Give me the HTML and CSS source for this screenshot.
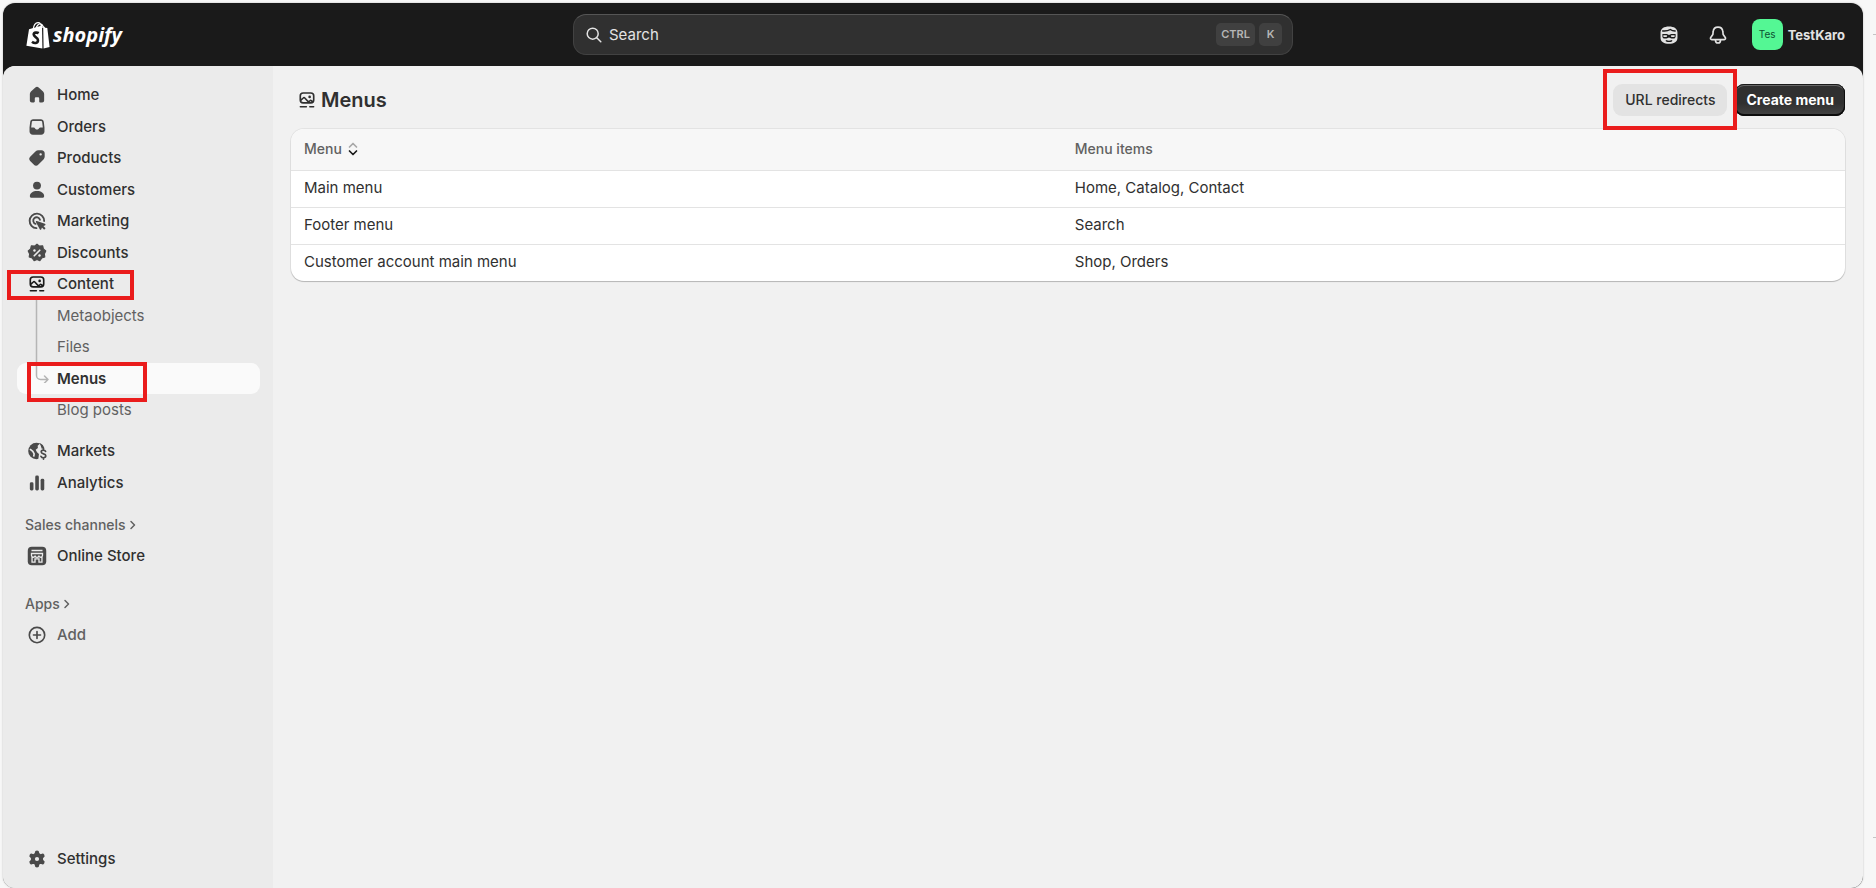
FILE: index.html
```
<!DOCTYPE html>
<html lang="en">
<head>
    <meta charset="UTF-8">
    <meta name="viewport" content="width=device-width, initial-scale=1.0">
    <title>Menus - TestKaro</title>
    <link rel="stylesheet" href="styles.css">
</head>
<body>

    <svg class="sprite" aria-hidden="true">
        <symbol id="icon-content" viewBox="0 0 20 20">
            <rect x="3.900" y="3.600" width="12.200" height="9" rx="2.600" fill="none" stroke="currentColor" stroke-width="1.500"/>
            <path d="M4.200 10.400l2.400-2.200a1 1 0 0 1 1.400 0l3.400 3.600 1.200-1.100a1 1 0 0 1 1.400 0l1.600 1.200" fill="none" stroke="currentColor" stroke-width="1.500"/>
            <circle cx="12.400" cy="7.200" r="1.200" fill="currentColor"/>
            <path d="M4 16.100h5.400M12.600 16.100h3.400" stroke="currentColor" stroke-width="1.500" stroke-linecap="round"/>
        </symbol>
        <symbol id="icon-chevron" viewBox="0 0 10 10">
            <path d="M3 1.500l3.500 3.500L3 8.500" fill="none" stroke="currentColor" stroke-width="1.500" stroke-linecap="round" stroke-linejoin="round"/>
        </symbol>
    </svg>

    <div class="app">
        <header class="topbar">
            <a class="logo" href="#" aria-label="shopify home">
                <svg class="logo-bag" viewBox="0 0 24 28">
                    <path d="M7 9C7.500 5 9.500 1.600 12 1.600S15.500 4 15.700 7M10 8C10.500 5 12.500 2.700 14.300 2.900S17 5 17.200 7" fill="none" stroke="#fff" stroke-width="1.200"/>
                    <path d="M3 8.300l13-3.700.4 23L.4 24.700z" fill="#fff"/>
                    <path d="M17.200 4.600l2 2.200 2.100.3 2.300 18.800-6 1.700z" fill="#fff"/>
                    <path d="M12.700 12.200c-1.200-.8-5-1.100-5 1.400 0 2.500 4.300 2.600 4.300 5.700 0 3.300-3.800 3.300-6 1.500" fill="none" stroke="#1a1a1a" stroke-width="2.600"/>
                </svg>
                <span class="logo-text">shopify</span>
            </a>

            <button class="search" type="button">
                <svg class="search-icon" viewBox="0 0 16 16"><circle cx="6.700" cy="6.700" r="5.500"/><path d="M10.800 10.800l4 4"/></svg>
                <span class="search-label">Search</span>
                <kbd>CTRL</kbd>
                <kbd>K</kbd>
            </button>

            <div class="topbar-right">
                <button class="icon-button" type="button" aria-label="Sidekick">
                    <svg viewBox="0 0 20 20">
                        <path d="M2.300 8C2.300 4 5.500 2.200 10 2.200S17.700 4 17.700 8v4.500c0 3.700-3.200 5.500-7.700 5.500s-7.700-1.800-7.700-5.500z" fill="#e3e3e3"/>
                        <path d="M4.200 6.300c2.600.3 5-.1 7-1.300 1.300.9 2.700 1.300 4.400 1.400" fill="none" stroke="#1a1a1a" stroke-width="1.300" stroke-linecap="round"/>
                        <path d="M4 9.200h4l2 .9 2-.9h4v2.300a2 2 0 0 1-2 1.700h-1.700c-1 0-1.500-.9-2.300-.9s-1.300.9-2.300.9H6a2 2 0 0 1-2-1.700z" fill="#1a1a1a"/>
                        <path d="M5.400 11h2.200M12.400 11h2.200" stroke="#e3e3e3" stroke-width="1.500" stroke-linecap="round"/>
                        <path d="M7.600 15.300c1.500.6 3.300.6 4.800 0" fill="none" stroke="#1a1a1a" stroke-width="1.300" stroke-linecap="round"/>
                    </svg>
                </button>
                <button class="icon-button" type="button" aria-label="Notifications">
                    <svg viewBox="0 0 20 20" fill="none" stroke="#e3e3e3" stroke-width="1.500" stroke-linejoin="round">
                        <path d="M10 2.800c-2.500 0-4.200 1.800-4.400 4.200l-.3 2.600-1.900 2.700c-.6.9-.1 1.900.9 1.900h11.400c1 0 1.500-1 .9-1.900l-1.900-2.700-.3-2.600C14.200 4.600 12.500 2.800 10 2.800z"/>
                        <path d="M7.700 14.500c0 3.700 4.600 3.700 4.600 0"/>
                    </svg>
                </button>
                <button class="account" type="button">
                    <span class="avatar">Tes</span>
                    <span>TestKaro</span>
                </button>
            </div>
        </header>

        <div class="frame">
            <nav class="sidebar" aria-label="Main">
                <ul class="nav-list">
                    <li><a class="nav-item" href="#">
                        <svg class="nav-icon" viewBox="0 0 20 20"><path d="M8.500 3.100a2.200 2.200 0 0 1 3 0l4 3.700c.6.600 1 1.400 1 2.200v6c0 1-.8 1.800-1.800 1.800h-1.900a.8.8 0 0 1-.8-.8v-2.700c0-.7-.5-1.200-1.200-1.200h-1.600c-.7 0-1.200.5-1.200 1.200V16c0 .4-.4.8-.8.800H5.300c-1 0-1.800-.8-1.800-1.800V9c0-.8.4-1.600 1-2.200z"/></svg>
                        Home</a></li>
                    <li><a class="nav-item" href="#">
                        <svg class="nav-icon" viewBox="0 0 20 20"><path fill-rule="evenodd" d="M6.500 3h7c1.500 0 2.500 1 2.700 2.400l.6 5.100V14c0 1.700-1.300 3-3 3H6.200c-1.700 0-3-1.300-3-3v-3.500l.6-5.100C4 4 5 3 6.500 3zm0 1.500c-.7 0-1.100.4-1.200 1.100l-.6 4.900h2.200c.7 0 1.100.3 1.400.8.600 1.300 2.800 1.300 3.400 0 .3-.5.7-.8 1.400-.8h2.200l-.6-4.900c-.1-.7-.5-1.100-1.200-1.100z"/></svg>
                        Orders</a></li>
                    <li><a class="nav-item" href="#">
                        <svg class="nav-icon" viewBox="0 0 20 20"><path fill-rule="evenodd" d="M11.300 3h2.900C15.800 3 17 4.200 17 5.800v2.900c0 1-.4 2-1.100 2.700l-4.600 4.600a3 3 0 0 1-4.300 0L4 13a3 3 0 0 1 0-4.300L8.600 4.100A3.800 3.800 0 0 1 11.300 3zm2 4.800a1.100 1.100 0 1 0 0-2.200 1.100 1.100 0 0 0 0 2.200z"/></svg>
                        Products</a></li>
                    <li><a class="nav-item" href="#">
                        <svg class="nav-icon" viewBox="0 0 20 20"><circle cx="10" cy="6" r="3.600"/><path d="M3.500 15.600c0-2.700 2.800-4.600 6.500-4.600s6.500 1.900 6.500 4.600c0 .8-.6 1.400-1.400 1.400H4.900c-.8 0-1.400-.6-1.400-1.400z"/></svg>
                        Customers</a></li>
                    <li><a class="nav-item" href="#">
                        <svg class="nav-icon" viewBox="0 0 20 20"><path d="M9.500 16.500a6.600 6.600 0 1 1 7-6.500M8.700 12.600a3.100 3.100 0 1 1 4-3.700" fill="none" stroke="currentColor" stroke-width="1.700" stroke-linecap="round"/><path d="M9.900 10l7.300 2.600c.7.300.7 1.100 0 1.400l-1.400.6 2 2-1.300 1.300-2-2-.6 1.500c-.3.7-1.200.7-1.400 0L9 10.800c-.2-.5.300-1 .9-.8z"/></svg>
                        Marketing</a></li>
                    <li><a class="nav-item" href="#">
                        <svg class="nav-icon" viewBox="0 0 20 20"><path d="M10 1.900l2.300 1.800 2.900-.2.600 2.800 2.200 1.900-1.300 2.600.4 2.900-2.800.9-1.700 2.400-2.600-1.100-2.600 1.100-1.700-2.400-2.800-.9.400-2.900L2 8.200l2.200-1.900.6-2.800 2.900.2z" stroke="currentColor" stroke-width="1" stroke-linejoin="round"/><path d="M7.500 12.500l5-5" stroke="#ebebeb" stroke-width="1.500" stroke-linecap="round"/><circle cx="7.700" cy="7.800" r="1.100" fill="#ebebeb"/><circle cx="12.300" cy="12.200" r="1.100" fill="#ebebeb"/></svg>
                        Discounts</a></li>
                    <li><a class="nav-item" href="#">
                        <svg class="nav-icon dark"><use href="#icon-content"/></svg>
                        Content</a>
                        <span class="mark mark-content"></span></li>
                    <li><a class="nav-item sub" href="#">Metaobjects</a></li>
                    <li><a class="nav-item sub" href="#">Files</a></li>
                    <li>
                        <a class="nav-item sub active" href="#" aria-current="page">Menus</a>
                        <svg class="branch" viewBox="0 0 14 84" fill="none" stroke="#b5b5b5" stroke-width="1.500" stroke-linecap="round" stroke-linejoin="round"><path d="M1.500 0v76.500a4 4 0 0 0 4 4H13M9.500 77l3.500 3.500L9.500 84"/></svg>
                        <span class="mark mark-menus"></span>
                    </li>
                    <li><a class="nav-item sub" href="#">Blog posts</a></li>
                </ul>

                <ul class="nav-list nav-more">
                    <li><a class="nav-item" href="#">
                        <svg class="nav-icon" viewBox="0 0 20 20"><circle cx="9.500" cy="10" r="7.500"/><path d="M3.600 8.200l2.600 2.200 1.200 2.200-.4 2.600" fill="none" stroke="#ebebeb" stroke-width="1.500" stroke-linejoin="round"/><path d="M12.600 3.400l-2 1.900.2 1.900-2 1.600 1.200 2.400 1.800 1.600-.6 4.800H20V6.500l-5.600-.5z" fill="#ebebeb"/><path d="M12.600 2.800A7.500 7.500 0 0 1 16.800 7.400l-2.500.5z"/><path d="M17.800 10.400c-.4-.8-1.100-1.200-2-1.200-1.100 0-2 .7-2 1.700 0 2.300 4.200 1.200 4.200 3.500 0 1-.9 1.700-2.100 1.700-1 0-1.900-.5-2.300-1.300M15.900 7.900v1.300M15.900 16.100v1.400" fill="none" stroke="currentColor" stroke-width="1.500" stroke-linecap="round"/></svg>
                        Markets</a></li>
                    <li><a class="nav-item" href="#">
                        <svg class="nav-icon" viewBox="0 0 20 20"><rect x="3.500" y="9.300" width="3.300" height="7.500" rx="1.300"/><rect x="8.400" y="3.200" width="3.300" height="13.600" rx="1.300"/><rect x="13.300" y="6.200" width="3.300" height="10.600" rx="1.300"/></svg>
                        Analytics</a></li>
                </ul>

                <a class="nav-heading" href="#">Sales channels <svg><use href="#icon-chevron"/></svg></a>
                <a class="nav-item" href="#">
                    <svg class="nav-icon" viewBox="0 0 20 20"><rect x="1.600" y="1.600" width="16.800" height="16.800" rx="3.600"/><path d="M5 5h10M5 7.700h10v1.800a1.600 1.600 0 0 1-3.300 0 1.600 1.600 0 0 1-3.400 0 1.600 1.600 0 0 1-3.300 0zM5.500 11v4.600h2.700v-3h3.600v3h2.700V11" fill="none" stroke="#ebebeb" stroke-width="1.200"/></svg>
                    Online Store</a>

                <a class="nav-heading nav-heading-apps" href="#">Apps <svg><use href="#icon-chevron"/></svg></a>
                <a class="nav-item muted" href="#">
                    <svg class="nav-icon" viewBox="0 0 20 20"><path d="M10 3a7 7 0 1 0 0 14 7 7 0 0 0 0-14zM6.800 10h6.400M10 6.800v6.400" fill="none" stroke="currentColor" stroke-width="1.500" stroke-linecap="round"/></svg>
                    Add</a>

                <a class="nav-item settings" href="#">
                    <svg class="nav-icon" viewBox="0 0 20 20"><path d="M10 4.300v11.400M5.100 7.200l9.800 5.600M14.900 7.200l-9.800 5.600" stroke="currentColor" stroke-width="4" stroke-linecap="round"/><circle cx="10" cy="10" r="5.600"/><circle cx="10" cy="10" r="1.900" fill="#ebebeb"/></svg>
                    Settings</a>
            </nav>

            <main class="page">
                <div class="page-header">
                    <h1><svg class="title-icon"><use href="#icon-content"/></svg>Menus</h1>
                    <div class="actions">
                        <div class="marked-action">
                            <button class="button" type="button">URL redirects</button>
                            <span class="mark mark-action"></span>
                        </div>
                        <button class="button primary" type="button">Create menu</button>
                    </div>
                </div>

                <div class="card">
                    <table>
                        <thead>
                            <tr>
                                <th class="col-menu" scope="col"><button class="sort" type="button">Menu
                                    <svg viewBox="0 0 10 14" fill="none" stroke-width="1.700" stroke-linecap="round" stroke-linejoin="round"><path d="M1.500 5L5 1.500 8.500 5" stroke="#a8a8a8"/><path d="M1.500 9L5 12.500 8.500 9" stroke="#1a1a1a"/></svg></button></th>
                                <th scope="col">Menu items</th>
                            </tr>
                        </thead>
                        <tbody>
                            <tr><td>Main menu</td><td>Home, Catalog, Contact</td></tr>
                            <tr><td>Footer menu</td><td>Search</td></tr>
                            <tr><td>Customer account main menu</td><td>Shop, Orders</td></tr>
                        </tbody>
                    </table>
                </div>
            </main>
        </div>
    </div>

</body>
</html>
```
FILE: styles.css
```
* {
    box-sizing: border-box;
}

body {
    margin: 0;
    padding: 3px 13px 0 3px;
    background-color: #f7f7f7;
    color: #303030;
    font-family: Inter, "Liberation Sans", sans-serif;
    font-size: 15px;
    line-height: 20px;
}

/* ticks at the window's right edge */
body::before,
body::after {
    content: "";
    position: absolute;
    top: 34px;
    right: 0;
    width: 3px;
    height: 1px;
    background-color: #c4c4c4;
}

body::after {
    top: auto;
    bottom: 50px;
}

button {
    border: 0;
    padding: 0;
    background: none;
    color: inherit;
    font: inherit;
    cursor: pointer;
}

a {
    color: inherit;
    text-decoration: none;
}

ul {
    list-style: none;
    margin: 0;
    padding: 0;
}

svg {
    display: block;
    flex-shrink: 0;
}

.sprite {
    position: absolute;
    width: 0;
    height: 0;
}

.app {
    display: flex;
    flex-direction: column;
    min-height: calc(100vh - 3px);
    border-radius: 12px;
    background-color: #1a1a1a;
    box-shadow: 0 0 2px rgba(0, 0, 0, 0.25);
}

/* top bar */
.topbar {
    display: grid;
    grid-template-columns: 1fr minmax(0, 720px) 1fr;
    align-items: center;
    height: 63px;
    padding: 0 18px;
    color: #e3e3e3;
}

.logo {
    display: flex;
    align-items: center;
    gap: 3px;
    padding-left: 5px;
}

.logo-bag {
    width: 24px;
    height: 28px;
}

.logo-text {
    color: #fff;
    font-family: "Open Sans", sans-serif;
    font-size: 20px;
    font-style: italic;
    font-weight: 700;
}

.search {
    display: flex;
    align-items: center;
    gap: 4px;
    height: 41px;
    padding: 0 10px 0 12px;
    border: 1px solid #424242;
    border-top-color: #555;
    border-radius: 13px;
    background-color: #303030;
    text-align: left;
}

.search-icon {
    width: 16px;
    height: 16px;
    margin-right: 3px;
    fill: none;
    stroke: #e3e3e3;
    stroke-width: 1.5;
    stroke-linecap: round;
}

.search-label {
    flex: 1;
}

kbd {
    min-width: 23px;
    padding: 2px 5px;
    border-radius: 5px;
    background-color: #404040;
    color: #b5b5b5;
    font-family: inherit;
    font-size: 11px;
    font-weight: 600;
    line-height: 19px;
    text-align: center;
}

.topbar-right {
    display: flex;
    align-items: center;
    justify-content: flex-end;
    gap: 27px;
}

.icon-button svg {
    width: 22px;
    height: 22px;
}

.account {
    display: flex;
    align-items: center;
    gap: 5px;
    margin-left: -4px;
    font-size: 13px;
    font-weight: 700;
}

.avatar {
    width: 31px;
    border-radius: 8px;
    background-color: #54f794;
    color: #0c5132;
    font-size: 10px;
    font-weight: 400;
    line-height: 31px;
}

/* frame */
.frame {
    display: flex;
    flex: 1;
    border-radius: 12px;
    background-color: #f1f1f1;
    overflow: hidden;
}

.sidebar {
    display: flex;
    flex-direction: column;
    width: 270px;
    padding: 13px 13px 14px 14px;
    background-color: #ebebeb;
    font-weight: 500;
}

.nav-list li {
    position: relative;
}

.nav-list li:nth-child(even) {
    padding-top: 1px;
}

.nav-more {
    margin-top: 10px;
}

.nav-item {
    display: flex;
    align-items: center;
    gap: 9px;
    height: 31px;
    padding-left: 9px;
    border-radius: 9px;
}

.nav-icon {
    width: 22px;
    height: 22px;
    fill: #4a4a4a;
    color: #4a4a4a;
}

.nav-icon.dark {
    color: #1a1a1a;
}

.sub {
    padding-left: 40px;
    color: #616161;
    font-weight: 400;
}

.sub.active {
    background-color: #fafafa;
    color: #303030;
    font-weight: 600;
}

.muted {
    color: #616161;
}

.nav-heading {
    display: flex;
    align-items: center;
    gap: 2px;
    height: 31px;
    margin-top: 11px;
    padding-left: 8px;
    color: #616161;
    font-size: 14px;
}

.nav-heading svg {
    width: 10px;
    height: 10px;
}

.nav-heading-apps {
    margin-top: 17px;
}

.settings {
    margin-top: auto;
}

.branch {
    position: absolute;
    left: 18px;
    bottom: 11px;
    width: 14px;
    height: 84px;
}

/* red highlight boxes */
.mark {
    position: absolute;
    border: 4px solid #ea1c1c;
    pointer-events: none;
}

.mark-content {
    top: 2px;
    left: -10px;
    width: 127px;
    height: 30px;
    z-index: 1;
}

.mark-menus {
    top: 0;
    left: 10px;
    width: 120px;
    height: 40px;
    z-index: 1;
}

.mark-action {
    inset: -15px -10px -14px;
}

/* page */
.page {
    flex: 1;
    min-width: 0;
    padding: 18px;
}

.page-header {
    display: flex;
    align-items: center;
    justify-content: space-between;
    margin-bottom: 13px;
    padding-left: 5px;
}

h1 {
    display: flex;
    align-items: center;
    gap: 3px;
    margin: 0;
    font-size: 20px;
    font-weight: 600;
    line-height: 28px;
}

.title-icon {
    width: 22px;
    height: 22px;
}

.actions {
    display: flex;
    gap: 8px;
}

.marked-action {
    position: relative;
    z-index: 1;
}

.button {
    height: 32px;
    padding: 0 12px;
    border-radius: 9px;
    background-color: #e3e3e3;
    font-size: 14px;
    font-weight: 500;
}

.button.primary {
    padding: 0 11px;
    background: linear-gradient(#303030 60%, #454545);
    box-shadow: inset 0 -1px 0 1px #0d0d0d, inset 0 0 0 1px #1a1a1a, inset 0 2px 0 #666;
    color: #fff;
    font-weight: 700;
}

.card {
    border-radius: 13px;
    background-color: #fff;
    box-shadow: 0 1px 1px rgba(0, 0, 0, 0.2), 0 0 0 1px #e3e3e3;
    overflow: hidden;
}

table {
    width: 100%;
    border-collapse: collapse;
}

th,
td {
    padding: 7px 13px 9px;
    text-align: left;
}

th {
    padding: 10px 13px 11px;
    background-color: #f7f7f7;
    color: #616161;
    font-size: 14px;
    font-weight: 500;
}

.col-menu {
    width: 49.6%;
}

tbody tr {
    border-top: 1px solid #e3e3e3;
}

.sort {
    display: flex;
    align-items: center;
    gap: 6px;
}

.sort svg {
    width: 10px;
    height: 14px;
}
```
